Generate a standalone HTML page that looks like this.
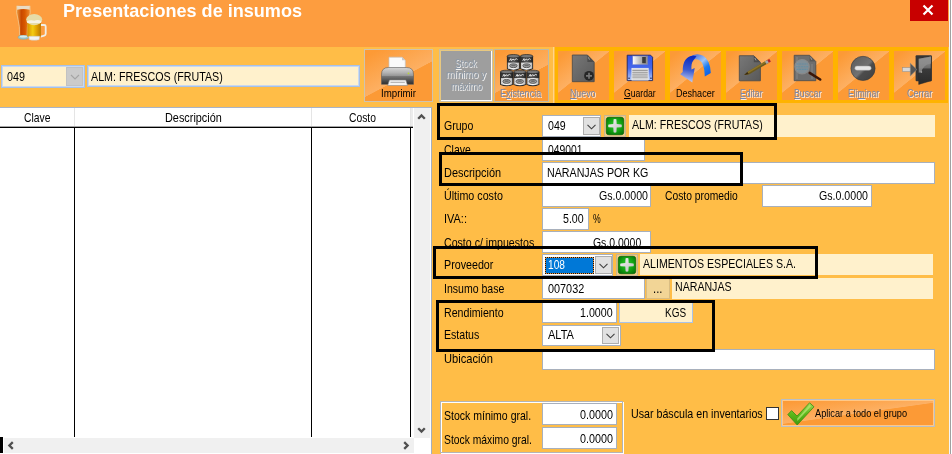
<!DOCTYPE html>
<html lang="es">
<head>
<meta charset="utf-8">
<title>Presentaciones de insumos</title>
<style>
*{box-sizing:border-box;margin:0;padding:0}
html,body{width:952px;height:454px;overflow:hidden}
body{position:relative;background:#FFBD47;font-family:"Liberation Sans",sans-serif;font-size:13px;color:#000}
.abs{position:absolute}
svg.abs{overflow:visible}
.t{position:absolute;white-space:nowrap;transform-origin:0 50%}
.tbw{background:linear-gradient(152deg,#FC9A36 8%,#FDB063 54%,#FC9A36 54.6%)}
.tbs{background:linear-gradient(141deg,#FC9A36 8%,#FDB063 46%,#FC9A36 46.8%)}
.tba{background:linear-gradient(172deg,#FC9A36 5%,#FDB063 50%,#FC9A36 51.5%)}
.dis{color:#7886A8;text-shadow:1px 1px 0 rgba(255,255,255,.8)}
.dis2{color:#8C98A6;text-shadow:1px 1px 0 rgba(255,255,255,.85)}
</style>
</head>
<body>
<svg width="0" height="0" style="position:absolute">
<defs>
<radialGradient id="gPlus" cx="50%" cy="45%" r="65%"><stop offset="0" stop-color="#2CD02C"/><stop offset="0.6" stop-color="#12A012"/><stop offset="1" stop-color="#067006"/></radialGradient>
<linearGradient id="gPlusW" x1="0" y1="0" x2="1" y2="1"><stop offset="0" stop-color="#F4F4F4"/><stop offset="1" stop-color="#BEBEBE"/></linearGradient>
<linearGradient id="gDoc" x1="0" y1="0" x2="1" y2="1"><stop offset="0" stop-color="#787878"/><stop offset="1" stop-color="#585858"/></linearGradient>
<linearGradient id="gPrn" x1="0" y1="0" x2="0" y2="1"><stop offset="0" stop-color="#D6D6D6"/><stop offset="0.300" stop-color="#B4B4B4"/><stop offset="0.480" stop-color="#989898"/><stop offset="0.520" stop-color="#787878"/><stop offset="1" stop-color="#2C2C2C"/></linearGradient>
<linearGradient id="gFlop" x1="0" y1="0" x2="0" y2="1"><stop offset="0" stop-color="#3452E6"/><stop offset="0.5" stop-color="#4468EA"/><stop offset="1" stop-color="#B4CAF4"/></linearGradient>
<linearGradient id="gShut" x1="0" y1="0" x2="1" y2="0"><stop offset="0" stop-color="#FFFFFF"/><stop offset="0.55" stop-color="#B0B0B0"/><stop offset="1" stop-color="#8A8A8A"/></linearGradient>
<linearGradient id="gArr" x1="0.2" y1="0" x2="0.1" y2="1"><stop offset="0" stop-color="#0C2CC0"/><stop offset="0.5" stop-color="#3C5CD0"/><stop offset="1" stop-color="#D8DCF4"/></linearGradient>
<linearGradient id="gArr2" x1="0" y1="0" x2="1" y2="1"><stop offset="0" stop-color="#1034C8"/><stop offset="0.5" stop-color="#9CC4F8"/><stop offset="0.7" stop-color="#1C7CF0"/><stop offset="1" stop-color="#0C58E0"/></linearGradient>
<linearGradient id="gElim" x1="0" y1="0" x2="1" y2="1"><stop offset="0" stop-color="#5A5A5A"/><stop offset="0.520" stop-color="#727272"/><stop offset="0.600" stop-color="#4C4C4C"/><stop offset="1" stop-color="#404040"/></linearGradient>
<linearGradient id="gDoor" x1="0" y1="0" x2="0" y2="1"><stop offset="0" stop-color="#A0A0A0"/><stop offset="0.4" stop-color="#6C6C6C"/><stop offset="0.45" stop-color="#3A3A3A"/><stop offset="1" stop-color="#2A2A2A"/></linearGradient>
<linearGradient id="gChk" x1="0" y1="0" x2="0" y2="1"><stop offset="0" stop-color="#A6DC5A"/><stop offset="0.5" stop-color="#5CB81A"/><stop offset="1" stop-color="#3E9A0E"/></linearGradient>
<linearGradient id="gBeerT" x1="0" y1="0" x2="1" y2="0"><stop offset="0" stop-color="#F0A040"/><stop offset="0.35" stop-color="#C84800"/><stop offset="0.6" stop-color="#D85800"/><stop offset="1" stop-color="#F09030"/></linearGradient>
<linearGradient id="gBeerM" x1="0" y1="0" x2="1" y2="0"><stop offset="0" stop-color="#D89000"/><stop offset="0.4" stop-color="#F4CC10"/><stop offset="0.7" stop-color="#E0A000"/><stop offset="1" stop-color="#B87800"/></linearGradient>
<linearGradient id="gCan" x1="0" y1="0" x2="1" y2="0"><stop offset="0" stop-color="#2A2A2A"/><stop offset="0.5" stop-color="#5A5A5A"/><stop offset="1" stop-color="#222"/></linearGradient>
<linearGradient id="gCanW" x1="0" y1="0" x2="1" y2="0"><stop offset="0" stop-color="#C8C8C8"/><stop offset="0.5" stop-color="#FFFFFF"/><stop offset="1" stop-color="#B8B8B8"/></linearGradient>

</defs>
</svg>
<div class="abs" style="left:0px;top:0px;width:952px;height:47px;background:#FD9D3F"></div>
<div class="t" style="left:63.05px;top:-0.58px;font-size:19px;line-height:24px;transform:scaleX(0.9510);font-weight:bold;color:#fff">Presentaciones de insumos</div>
<div class="abs" style="left:910px;top:0px;width:38px;height:21px;background:#C80000"></div>
<svg class="abs" style="left:921px;top:4px" width="14" height="12" viewBox="0 0 14 12"><path d="M2.5 1.5L11.5 10.5M11.5 1.5L2.5 10.5" stroke="#fff" stroke-width="2.2" fill="none"/></svg>
<svg class="abs" style="left:10px;top:0px" width="50" height="46" viewBox="10 0 50 46">
<ellipse cx="23.400" cy="37.200" rx="5.300" ry="2" fill="#A4CACA" stroke="#7FA6AA" stroke-width="0.600"/>
<ellipse cx="23.400" cy="36.600" rx="3.600" ry="1" fill="#D8ECEC"/>
<path d="M16.800 5.800q-1 7 1.200 13.500 1.900 7 1.600 15.700h7.600q-.3-8.700 1.600-15.700 2.200-6.500 1.200-13.500z" fill="url(#gBeerT)"/>
<path d="M16.800 5.800h13.200l-.2 4q-6.400-1.700-12.800 0z" fill="#EADCC4"/>
<path d="M16.800 5.800q-1 7 1.200 13.500 1.900 7 1.600 15.700M27.200 35q-.3-8.700 1.600-15.700 2.200-6.500 1.200-13.500" fill="none" stroke="#F4C890" stroke-width="0.900" opacity="0.900"/>
<path d="M40.800 25h3.400q1.500 0 1.500 1.500v7.300q0 1.500-1.500 1.900l-3.400.9" fill="none" stroke="#F0EFE6" stroke-width="1.800"/>
<path d="M27.300 22h13.600v13.500q0 1.500-1.500 1.500h-10.600q-1.500 0-1.500-1.500z" fill="url(#gBeerM)"/>
<path d="M28.800 36.300h10.800l-.5 3.400q-4.900 1-9.800 0z" fill="#F2F2F0" stroke="#C8C8C0" stroke-width="0.500"/>
<ellipse cx="34.200" cy="19.600" rx="8" ry="5.600" fill="#E6DCA8"/>
<path d="M26.800 21.300q3.500-1.800 7.500-.6 3.500-1.600 7 .4l-.4 2h-13.600z" fill="#F6F2E4"/>
</svg>
<div class="abs" style="left:1px;top:65px;width:84px;height:23px;background:#FFF1CC;border:1px solid #A6C1E9;box-shadow:inset 0 0 0 1px #C9D9F0"></div>
<div class="abs" style="left:66px;top:67px;width:17px;height:19px;background:#CBCBCB;border:1px solid #C2C2C2"></div>
<svg class="abs" style="left:70px;top:74px" width="10" height="6" viewBox="0 0 10 6"><path d="M1 1L5 5L9 1" stroke="#A4A4A4" stroke-width="1.100" fill="none"/></svg>
<div class="t" style="left:6.50px;top:68.50px;font-size:13px;line-height:16px;transform:scaleX(0.8248);">049</div>
<div class="abs" style="left:87px;top:65px;width:273px;height:22px;background:#FFF1CC;border:1px solid #A6C1E9;box-shadow:inset 0 0 0 1px #C9D9F0"></div>
<div class="t" style="left:91.00px;top:68.50px;font-size:13px;line-height:16px;transform:scaleX(0.8231);">ALM: FRESCOS (FRUTAS)</div>
<div class="abs" style="left:0px;top:107px;width:432px;height:347px;background:#fff;border-top:1px solid #A9B4C8;border-right:1px solid #A4AEC0"></div>
<div class="abs" style="left:0px;top:127px;width:413px;height:1px;background:#000"></div>
<div class="abs" style="left:0px;top:126px;width:413px;height:1px;background:rgba(0,0,0,.35)"></div>
<div class="abs" style="left:74px;top:128px;width:1px;height:309px;background:#000"></div>
<div class="abs" style="left:74px;top:108px;width:1px;height:18px;background:#E5E5E5"></div>
<div class="abs" style="left:311px;top:128px;width:1px;height:309px;background:#000"></div>
<div class="abs" style="left:311px;top:108px;width:1px;height:18px;background:#E5E5E5"></div>
<div class="abs" style="left:410px;top:128px;width:1px;height:309px;background:#000"></div>
<div class="abs" style="left:410px;top:108px;width:1px;height:18px;background:#E5E5E5"></div>
<div class="abs" style="left:411px;top:108px;width:2px;height:18px;background:#ECECEC"></div>
<div class="t" style="left:23.75px;top:110.25px;font-size:13px;line-height:16px;transform:scaleX(0.7953);">Clave</div>
<div class="t" style="left:164.66px;top:110.25px;font-size:13px;line-height:16px;transform:scaleX(0.8360);">Descripción</div>
<div class="t" style="left:348.75px;top:110.25px;font-size:13px;line-height:16px;transform:scaleX(0.7931);">Costo</div>
<div class="abs" style="left:414px;top:108px;width:16px;height:330px;background:#F0F0F0"></div>
<div class="abs" style="left:4px;top:438px;width:410px;height:15px;background:#F0F0F0"></div>
<div class="abs" style="left:0px;top:437px;width:3px;height:16px;background:#000"></div>
<svg class="abs" style="left:417px;top:113px" width="9" height="8" viewBox="0 0 9 8"><path d="M1.200 5.800L4.500 2.400L7.800 5.800" stroke="#505050" stroke-width="2.300" fill="none"/></svg>
<svg class="abs" style="left:417px;top:426px" width="9" height="8" viewBox="0 0 9 8"><path d="M1.200 2.200L4.500 5.600L7.800 2.200" stroke="#505050" stroke-width="2.300" fill="none"/></svg>
<svg class="abs" style="left:7px;top:441px" width="8" height="9" viewBox="0 0 8 9"><path d="M5.800 1.200L2.400 4.500L5.800 7.800" stroke="#505050" stroke-width="2.300" fill="none"/></svg>
<svg class="abs" style="left:402px;top:441px" width="8" height="9" viewBox="0 0 8 9"><path d="M2.200 1.200L5.600 4.500L2.200 7.800" stroke="#505050" stroke-width="2.300" fill="none"/></svg>
<div class="abs tbw" style="left:364px;top:49px;width:69px;height:53px;border:1px solid #CFC3B0"></div>
<svg class="abs" style="left:378px;top:54px" width="40" height="34" viewBox="378 54 40 34">
<path d="M389 57.200h13l3.300 3.300v9.500h-16.300z" fill="#FAFAFA" stroke="#C4C4C4" stroke-width="0.700"/>
<path d="M402 57v3.300h3.300z" fill="#C8C8C8"/>
<path d="M381.500 84.300v-10q0-6.800 7-6.800h18q7 0 7 6.800v10z" fill="url(#gPrn)"/>
<path d="M381.500 84.300v-10q0-6.800 7-6.800h18q7 0 7 6.800v10z" fill="none" stroke="#5A5A5A" stroke-width="0.6"/>
<circle cx="408.500" cy="73.300" r="0.900" fill="#B8D830"/>
<path d="M389.500 80h16.300l1.700 5.500h-19.800z" fill="#F4F4F4" stroke="#8A8A8A" stroke-width="0.600"/>
<path d="M390.500 82.300h14.300" stroke="#A8A8A8" stroke-width="1"/>
</svg>
<div class="t" style="left:380.60px;top:86.79px;font-size:10.7px;line-height:13px;transform:scaleX(0.9071);">Imprimir</div>
<div class="abs" style="left:439px;top:49px;width:54px;height:53px;background:#9E9E9E;border:1px solid #C9BFA8;box-shadow:inset 1px 1px 0 #E8C880, inset -1px -1px 0 #fff"></div>
<div class="t dis2" style="left:455.00px;top:57.53px;font-size:10px;line-height:12px;transform:scaleX(0.8651);"><u>S</u>tock</div>
<div class="t dis2" style="left:446.00px;top:68.83px;font-size:10px;line-height:12px;transform:scaleX(0.9862);">mínimo y</div>
<div class="t dis2" style="left:450.50px;top:80.53px;font-size:10px;line-height:12px;transform:scaleX(0.8887);">máximo</div>
<div class="abs tbw" style="left:494px;top:49px;width:55px;height:53px;border:1px solid #BDB9A6"></div>
<svg class="abs" style="left:498px;top:52px" width="44" height="36" viewBox="498 52 44 36">
<g transform="translate(506.900,54.200)"><path d="M0 2v12.800q6.500 3.200 13 0v-12.800z" fill="#262626"/>
<path d="M0.900 8h11.200v6.300q-5.600 2.300-11.200 0z" fill="url(#gCanW)"/>
<path d="M0.300 2.500h12.400v5.700h-12.400z" fill="url(#gCan)"/>
<ellipse cx="6.500" cy="2" rx="6.300" ry="1.700" fill="#777" stroke="#242424" stroke-width="0.700"/>
<path d="M2.600 6.600l1.300-2.200.5 2 1.700-1.400 1.500.7 1.800-1.200 1.200.8" stroke="#F0F0F0" stroke-width="0.900" fill="none"/>
<ellipse cx="6.500" cy="11.500" rx="3.700" ry="2" fill="#A4A4A4" stroke="#454545" stroke-width="0.800"/>
<ellipse cx="6.500" cy="11.200" rx="2.300" ry="0.900" fill="#6A6A6A"/></g><g transform="translate(520.100,54.200)"><path d="M0 2v12.800q6.500 3.200 13 0v-12.800z" fill="#262626"/>
<path d="M0.900 8h11.200v6.300q-5.600 2.300-11.200 0z" fill="url(#gCanW)"/>
<path d="M0.300 2.500h12.400v5.700h-12.400z" fill="url(#gCan)"/>
<ellipse cx="6.500" cy="2" rx="6.300" ry="1.700" fill="#777" stroke="#242424" stroke-width="0.700"/>
<path d="M2.600 6.600l1.300-2.200.5 2 1.700-1.400 1.500.7 1.800-1.200 1.200.8" stroke="#F0F0F0" stroke-width="0.900" fill="none"/>
<ellipse cx="6.500" cy="11.500" rx="3.700" ry="2" fill="#A4A4A4" stroke="#454545" stroke-width="0.800"/>
<ellipse cx="6.500" cy="11.200" rx="2.300" ry="0.900" fill="#6A6A6A"/></g>
<g transform="translate(500.100,69.900)"><path d="M0 2v12.800q6.500 3.200 13 0v-12.800z" fill="#262626"/>
<path d="M0.900 8h11.200v6.300q-5.600 2.300-11.200 0z" fill="url(#gCanW)"/>
<path d="M0.300 2.500h12.400v5.700h-12.400z" fill="url(#gCan)"/>
<ellipse cx="6.500" cy="2" rx="6.300" ry="1.700" fill="#777" stroke="#242424" stroke-width="0.700"/>
<path d="M2.600 6.600l1.300-2.200.5 2 1.700-1.400 1.500.7 1.800-1.200 1.200.8" stroke="#F0F0F0" stroke-width="0.900" fill="none"/>
<ellipse cx="6.500" cy="11.500" rx="3.700" ry="2" fill="#A4A4A4" stroke="#454545" stroke-width="0.800"/>
<ellipse cx="6.500" cy="11.200" rx="2.300" ry="0.900" fill="#6A6A6A"/></g><g transform="translate(513.300,69.900)"><path d="M0 2v12.800q6.500 3.200 13 0v-12.800z" fill="#262626"/>
<path d="M0.900 8h11.200v6.300q-5.600 2.300-11.200 0z" fill="url(#gCanW)"/>
<path d="M0.300 2.500h12.400v5.700h-12.400z" fill="url(#gCan)"/>
<ellipse cx="6.500" cy="2" rx="6.300" ry="1.700" fill="#777" stroke="#242424" stroke-width="0.700"/>
<path d="M2.600 6.600l1.300-2.200.5 2 1.700-1.400 1.500.7 1.800-1.200 1.200.8" stroke="#F0F0F0" stroke-width="0.900" fill="none"/>
<ellipse cx="6.500" cy="11.500" rx="3.700" ry="2" fill="#A4A4A4" stroke="#454545" stroke-width="0.800"/>
<ellipse cx="6.500" cy="11.200" rx="2.300" ry="0.900" fill="#6A6A6A"/></g><g transform="translate(526.400,69.900)"><path d="M0 2v12.800q6.500 3.200 13 0v-12.800z" fill="#262626"/>
<path d="M0.900 8h11.200v6.300q-5.600 2.300-11.200 0z" fill="url(#gCanW)"/>
<path d="M0.300 2.500h12.400v5.700h-12.400z" fill="url(#gCan)"/>
<ellipse cx="6.500" cy="2" rx="6.300" ry="1.700" fill="#777" stroke="#242424" stroke-width="0.700"/>
<path d="M2.600 6.600l1.300-2.200.5 2 1.700-1.400 1.500.7 1.800-1.200 1.200.8" stroke="#F0F0F0" stroke-width="0.900" fill="none"/>
<ellipse cx="6.500" cy="11.500" rx="3.700" ry="2" fill="#A4A4A4" stroke="#454545" stroke-width="0.800"/>
<ellipse cx="6.500" cy="11.200" rx="2.300" ry="0.900" fill="#6A6A6A"/></g>
</svg>
<div class="t dis" style="left:499.90px;top:87.94px;font-size:10px;line-height:12px;transform:scaleX(0.9041);">E<u>x</u>istencia</div>
<div class="abs" style="left:553px;top:47px;width:1px;height:56px;background:#FFD48A"></div>
<div class="abs" style="left:555px;top:47px;width:393px;height:56px;background:#FFB300"></div>
<div class="abs tbs" style="left:558px;top:51px;width:51px;height:49px;"></div>
<div class="abs tbs" style="left:614px;top:51px;width:51px;height:49px;"></div>
<div class="abs tbs" style="left:670px;top:51px;width:51px;height:49px;"></div>
<div class="abs tbs" style="left:726px;top:51px;width:51px;height:49px;"></div>
<div class="abs tbs" style="left:782px;top:51px;width:51px;height:49px;"></div>
<div class="abs tbs" style="left:838px;top:51px;width:51px;height:49px;"></div>
<div class="abs tbs" style="left:894px;top:51px;width:51px;height:49px;"></div>
<svg class="abs" style="left:570px;top:53px" width="28" height="32" viewBox="570 53 28 32">
<path d="M572.300 55h15.100l6.800 7v19.700h-21.900z" fill="url(#gDoc)" stroke="#474747" stroke-width="0.800"/>
<path d="M587.400 55v7h6.800z" fill="#4C4C4C"/>
<path d="M588.300 57.300l1.200 2.400" stroke="#B0B0B0" stroke-width="0.800"/>
<circle cx="589" cy="75.800" r="4.900" fill="#262626"/>
<path d="M589 72.800v6M586 75.800h6" stroke="#767676" stroke-width="1.700"/>
</svg><svg class="abs" style="left:625px;top:53px" width="30" height="30" viewBox="625 53 30 30">
<path d="M627.200 55.200h23.400l2 2v23.400h-25.400z" fill="url(#gFlop)" stroke="#1E2460" stroke-width="0.900"/>
<rect x="632.700" y="56" width="15.100" height="8.700" fill="url(#gShut)" stroke="#7080C8" stroke-width="0.500"/>
<rect x="642.200" y="57" width="3.600" height="6.200" fill="#3A3A3A"/>
<rect x="631.900" y="68.300" width="16.300" height="11.800" fill="#D4D4D4" stroke="#F4F4F4" stroke-width="0.700"/>
<path d="M632.400 70.500h15.300M632.400 72.700h15.300M632.400 74.900h15.300M632.400 77.100h15.300" stroke="#9C9C9C" stroke-width="1"/>
<rect x="628.400" y="77.600" width="1.300" height="1.300" fill="#1A1A50"/><rect x="650.300" y="77.600" width="1.300" height="1.300" fill="#1A1A50"/>
</svg><svg class="abs" style="left:678px;top:52px" width="36" height="34" viewBox="678 52 36 34">
<path d="M690 64q3-6.500 9-4 5.500 2.500 5.800 16.500l6-3.500q-.5-13-7.500-17.300-7-3.700-14 1.300-4.500 3.800-4.800 11z" fill="url(#gArr2)"/>
<path d="M696.500 56.200q-7-1.500-11 3.500-3 4-2.800 12.300l-2.500 2.300 12.100 8.300 2.400-14.600-3.200 1.500q-.5-6 1.500-8.500 1.300-2 3.500-4.800z" fill="url(#gArr)"/>
</svg><svg class="abs" style="left:737px;top:53px" width="36" height="32" viewBox="737 53 36 32">
<path d="M739.300 55.700h14.500l6.600 6.600v18.500h-21.100z" fill="url(#gDoc)" stroke="#474747" stroke-width="0.800"/>
<path d="M753.800 55.700v6.600h6.600z" fill="#4C4C4C"/>
<path d="M754.800 58l1.200 2.400" stroke="#B0B0B0" stroke-width="0.800"/>
<path d="M744.100 75.100l3.200-3.200 19.600-11.600 1.600 2.600-19.600 11.600z" fill="#6C5A1E"/>
<path d="M747.300 71.900l19.600-11.600.8 1.300-19.600 11.600z" fill="#8C7428"/>
<path d="M744.100 75.100l3.200-3.200 1.300 2.100z" fill="#3A2A10"/>
<path d="M764.900 61.500l2.400-1.400 1.600 2.600-2.400 1.400z" fill="#A8A8A8"/>
<path d="M767.300 60.100l2-1.200 1.600 2.600-2 1.200z" fill="#B02030"/>
</svg><svg class="abs" style="left:792px;top:53px" width="32" height="30" viewBox="792 53 32 30">
<path d="M794.200 55.300h15.400l6.200 6.200v19.200h-21.600z" fill="#6E6E6E" stroke="#4A4A4A" stroke-width="0.800"/>
<path d="M797 57v22M812 64v15" stroke="#7E7E7E" stroke-width="1.600"/>
<path d="M809.600 55.300v6.200h6.200z" fill="#585858"/>
<path d="M810.600 57.400l1.200 2.400" stroke="#B0B0B0" stroke-width="0.800"/>
<circle cx="802.100" cy="66.700" r="7.200" fill="#8CA2AE" fill-opacity="0.650" stroke="#8A8A8A" stroke-width="1.100"/>
<path d="M796.500 64h11.200M795.800 66.700h12.600M796.500 69.400h11.200" stroke="#5E8CA4" stroke-opacity="0.750" stroke-width="1.100" stroke-dasharray="2 0.600"/>
<path d="M807.800 72.200l2.200 1.200" stroke="#8A8A8A" stroke-width="2"/>
<path d="M809.600 72.900l10.600 6.600" stroke="#3C1608" stroke-width="2.600" stroke-linecap="round"/>
</svg><svg class="abs" style="left:850px;top:55px" width="27" height="27" viewBox="850 55 27 27">
<circle cx="863" cy="68.400" r="12.100" fill="url(#gElim)" stroke="#3A3A3A" stroke-width="0.600"/>
<rect x="854.800" y="66" width="16.400" height="4.300" rx="2.100" fill="#E6E6E6" stroke="#9A9A9A" stroke-width="0.500"/>
</svg><svg class="abs" style="left:900px;top:53px" width="34" height="34" viewBox="900 53 34 34">
<rect x="915.600" y="55.300" width="16.300" height="26" rx="1" fill="#343434"/>
<path d="M918.700 58.800l12.300-2.200v24.200l-12.300 3.600z" fill="url(#gDoor)" stroke="#2A2A2A" stroke-width="0.500"/>
<path d="M918.700 58.800l12.300-2.200v7q-8 1-9.500 8.500l-2.800.6z" fill="#8E8E8E" opacity="0.800"/>
<circle cx="921.300" cy="72" r="0.900" fill="#9A9A9A"/>
<rect x="902.400" y="67.600" width="9" height="4" fill="#D8D8D8" stroke="#8A8A8A" stroke-width="0.500"/>
<path d="M910.300 63.200l6.600 6.400-6.600 6.400z" fill="#555" stroke="#8A8A8A" stroke-width="0.500"/>
</svg>
<div class="t dis" style="left:570.00px;top:88.03px;font-size:10px;line-height:12px;transform:scaleX(0.8792);"><u>N</u>uevo</div>
<div class="t" style="left:623.70px;top:88.03px;font-size:10px;line-height:12px;transform:scaleX(0.8647);"><u>G</u>uardar</div>
<div class="t" style="left:675.70px;top:88.03px;font-size:10px;line-height:12px;transform:scaleX(0.9041);">Deshacer</div>
<div class="t dis" style="left:739.90px;top:88.03px;font-size:10px;line-height:12px;transform:scaleX(0.8622);"><u>E</u>ditar</div>
<div class="t dis" style="left:793.60px;top:88.03px;font-size:10px;line-height:12px;transform:scaleX(0.8776);"><u>B</u>uscar</div>
<div class="t dis" style="left:847.70px;top:88.03px;font-size:10px;line-height:12px;transform:scaleX(0.8644);">Eli<u>m</u>inar</div>
<div class="t dis" style="left:906.60px;top:88.03px;font-size:10px;line-height:12px;transform:scaleX(0.8930);">Cerrar</div>
<div class="abs" style="left:949px;top:0px;width:1px;height:454px;background:#F4F5F9"></div>
<div class="abs" style="left:950px;top:0px;width:1px;height:454px;background:#A0A0A0"></div>
<div class="abs" style="left:951px;top:0px;width:1px;height:454px;background:#FFFFFF"></div>
<div class="abs" style="left:629px;top:115px;width:306px;height:22px;background:#FFF1CC"></div>
<div class="abs" style="left:640px;top:254px;width:293px;height:21px;background:#FFF1CC"></div>
<div class="abs" style="left:672px;top:278px;width:261px;height:21px;background:#FFF1CC"></div>
<div class="t" style="left:444.40px;top:118.25px;font-size:13px;line-height:16px;transform:scaleX(0.8106);">Grupo</div>
<div class="t" style="left:444.40px;top:141.50px;font-size:13px;line-height:16px;transform:scaleX(0.8059);">Clave</div>
<div class="t" style="left:443.56px;top:165.25px;font-size:13px;line-height:16px;transform:scaleX(0.8413);">Descripción</div>
<div class="t" style="left:443.58px;top:188.25px;font-size:13px;line-height:16px;transform:scaleX(0.8230);">Último costo</div>
<div class="t" style="left:443.56px;top:211.00px;font-size:13px;line-height:16px;transform:scaleX(0.8437);">IVA::</div>
<div class="t" style="left:444.40px;top:234.50px;font-size:13px;line-height:16px;transform:scaleX(0.8159);">Costo c/ impuestos</div>
<div class="t" style="left:443.58px;top:257.25px;font-size:13px;line-height:16px;transform:scaleX(0.8231);">Proveedor</div>
<div class="t" style="left:443.59px;top:281.00px;font-size:13px;line-height:16px;transform:scaleX(0.8108);">Insumo base</div>
<div class="t" style="left:443.58px;top:304.75px;font-size:13px;line-height:16px;transform:scaleX(0.8167);">Rendimiento</div>
<div class="t" style="left:443.59px;top:327.25px;font-size:13px;line-height:16px;transform:scaleX(0.8132);">Estatus</div>
<div class="t" style="left:443.54px;top:351.00px;font-size:13px;line-height:16px;transform:scaleX(0.8567);">Ubicación</div>
<div class="t" style="left:664.50px;top:188.25px;font-size:13px;line-height:16px;transform:scaleX(0.7920);">Costo promedio</div>
<div class="t" style="left:593.00px;top:211.00px;font-size:13px;line-height:16px;transform:scaleX(0.6667);">%</div>
<div class="abs" style="left:542px;top:115px;width:59px;height:22px;background:#fff;border:1px solid #A8B0BC;"></div>
<div class="abs" style="left:583px;top:117px;width:17px;height:18px;background:#E1E1E1;border:1px solid #ADADAD"></div><svg class="abs" style="left:587.0px;top:123.5px" width="9" height="6" viewBox="0 0 9 6"><path d="M0.5 0.8L4.5 4.8L8.5 0.8" stroke="#404040" stroke-width="1.1" fill="none"/></svg>
<div class="t" style="left:547.50px;top:118.00px;font-size:13px;line-height:16px;transform:scaleX(0.8155);">049</div>
<svg class="abs" style="left:603.5px;top:115px" width="22" height="22" viewBox="0 0 22 22"><rect x="0.5" y="0.5" width="21" height="21" fill="#EFC98A" stroke="#C8B690"/><rect x="2.3" y="2.3" width="17.4" height="17.4" rx="2.5" fill="url(#gPlus)" stroke="#0B6A0B" stroke-width="0.8"/><path d="M9.600 4.300q1.400-.8 2.800 0l.3 4.800 4.800.3q.8 1.400 0 2.800l-4.800.3-.3 4.800q-1.400.8-2.800 0l-.3-4.800-4.800-.3q-.8-1.400 0-2.800l4.800-.3z" fill="url(#gPlusW)"/></svg>
<div class="t" style="left:631.75px;top:117.00px;font-size:13px;line-height:16px;transform:scaleX(0.8168);">ALM: FRESCOS (FRUTAS)</div>
<div class="abs" style="left:542px;top:139px;width:103px;height:22px;background:#fff;border:1px solid #A8B0BC;"></div>
<div class="t" style="left:547.50px;top:141.50px;font-size:13px;line-height:16px;transform:scaleX(0.7937);">049001</div>
<div class="abs" style="left:542px;top:162px;width:393px;height:22px;background:#fff;border:1px solid #A8B0BC;"></div>
<div class="t" style="left:546.68px;top:165.25px;font-size:13px;line-height:16px;transform:scaleX(0.8210);">NARANJAS POR KG</div>
<div class="abs" style="left:542px;top:185px;width:109px;height:22px;background:#fff;border:1px solid #A8B0BC;"></div>
<div class="t" style="left:598.75px;top:188.25px;font-size:13px;line-height:16px;transform:scaleX(0.8158);">Gs.0.0000</div>
<div class="abs" style="left:762px;top:185px;width:110px;height:22px;background:#fff;border:1px solid #A8B0BC;"></div>
<div class="t" style="left:818.50px;top:188.25px;font-size:13px;line-height:16px;transform:scaleX(0.8158);">Gs.0.0000</div>
<div class="abs" style="left:542px;top:208px;width:47px;height:22px;background:#fff;border:1px solid #A8B0BC;"></div>
<div class="t" style="left:563.00px;top:211.00px;font-size:13px;line-height:16px;transform:scaleX(0.8177);">5.00</div>
<div class="abs" style="left:542px;top:231px;width:109px;height:22px;background:#fff;border:1px solid #A8B0BC;"></div>
<div class="t" style="left:593.00px;top:234.50px;font-size:13px;line-height:16px;transform:scaleX(0.8033);">Gs.0.0000</div>
<div class="abs" style="left:542px;top:254px;width:71px;height:22px;background:#fff;border:1px solid #A8B0BC;"></div>
<div class="abs" style="left:545px;top:257px;width:49px;height:17px;background:#0078D7;border:1px solid #E8903A;outline:1px dotted #111;outline-offset:-1px"></div>
<div class="t" style="left:548.00px;top:257.25px;font-size:13px;line-height:16px;transform:scaleX(0.7805);color:#fff">108</div>
<div class="abs" style="left:595px;top:256px;width:17px;height:18px;background:#E1E1E1;border:1px solid #ADADAD"></div><svg class="abs" style="left:599.0px;top:262.5px" width="9" height="6" viewBox="0 0 9 6"><path d="M0.5 0.8L4.5 4.8L8.5 0.8" stroke="#404040" stroke-width="1.1" fill="none"/></svg>
<svg class="abs" style="left:616px;top:254px" width="22" height="22" viewBox="0 0 22 22"><rect x="0.5" y="0.5" width="21" height="21" fill="#EFC98A" stroke="#C8B690"/><rect x="2.3" y="2.3" width="17.4" height="17.4" rx="2.5" fill="url(#gPlus)" stroke="#0B6A0B" stroke-width="0.8"/><path d="M9.600 4.300q1.400-.8 2.800 0l.3 4.800 4.800.3q.8 1.400 0 2.800l-4.800.3-.3 4.800q-1.400.8-2.800 0l-.3-4.800-4.800-.3q-.8-1.400 0-2.800l4.800-.3z" fill="url(#gPlusW)"/></svg>
<div class="t" style="left:643.00px;top:256.00px;font-size:13px;line-height:16px;transform:scaleX(0.8155);">ALIMENTOS ESPECIALES S.A.</div>
<div class="abs" style="left:542px;top:278px;width:103px;height:21px;background:#fff;border:1px solid #A8B0BC;"></div>
<div class="t" style="left:547.50px;top:281.00px;font-size:13px;line-height:16px;transform:scaleX(0.8343);">007032</div>
<div class="abs" style="left:646px;top:278px;width:24px;height:21px;background:#F2D596;border:1px solid #D9BD83"></div>
<div class="t" style="left:653.13px;top:281.00px;font-size:13px;line-height:16px;transform:scaleX(0.8673);">...</div>
<div class="t" style="left:674.93px;top:279.00px;font-size:13px;line-height:16px;transform:scaleX(0.8154);">NARANJAS</div>
<div class="abs" style="left:542px;top:302px;width:75px;height:21px;background:#fff;border:1px solid #A8B0BC;"></div>
<div class="t" style="left:580.00px;top:304.75px;font-size:13px;line-height:16px;transform:scaleX(0.8221);">1.0000</div>
<div class="abs" style="left:619px;top:302px;width:74px;height:21px;background:#FFF1CC;border:1px solid #A9C3E8"></div>
<div class="t" style="left:664.98px;top:304.75px;font-size:13px;line-height:16px;transform:scaleX(0.7654);">KGS</div>
<div class="abs" style="left:542px;top:325px;width:79px;height:21px;background:#fff;border:1px solid #A8B0BC;"></div>
<div class="abs" style="left:602px;top:327px;width:17px;height:17px;background:#E1E1E1;border:1px solid #ADADAD"></div><svg class="abs" style="left:606.0px;top:333.0px" width="9" height="6" viewBox="0 0 9 6"><path d="M0.5 0.8L4.5 4.8L8.5 0.8" stroke="#404040" stroke-width="1.1" fill="none"/></svg>
<div class="t" style="left:547.50px;top:327.25px;font-size:13px;line-height:16px;transform:scaleX(0.8492);">ALTA</div>
<div class="abs" style="left:542px;top:349px;width:393px;height:21px;background:#fff;border:1px solid #A8B0BC;"></div>
<div class="abs" style="left:440px;top:401px;width:183px;height:52px;border:1px solid #B4B4B4;box-shadow:inset 1px 1px 0 #fff, 1px 1px 0 #fff"></div>
<div class="t" style="left:444.40px;top:407.50px;font-size:13px;line-height:16px;transform:scaleX(0.8091);">Stock mínimo gral.</div>
<div class="t" style="left:444.40px;top:431.50px;font-size:13px;line-height:16px;transform:scaleX(0.7947);">Stock máximo gral.</div>
<div class="abs" style="left:542px;top:403px;width:75px;height:22px;background:#fff;border:1px solid #A8B0BC;"></div>
<div class="t" style="left:579.75px;top:406.50px;font-size:13px;line-height:16px;transform:scaleX(0.8284);">0.0000</div>
<div class="abs" style="left:542px;top:427px;width:75px;height:22px;background:#fff;border:1px solid #A8B0BC;"></div>
<div class="t" style="left:579.75px;top:430.50px;font-size:13px;line-height:16px;transform:scaleX(0.8284);">0.0000</div>
<div class="t" style="left:630.58px;top:406.00px;font-size:13px;line-height:16px;transform:scaleX(0.8210);">Usar báscula en inventarios</div>
<div class="abs" style="left:766px;top:407px;width:13px;height:13px;background:#fff;border:1px solid #333"></div>
<div class="abs tba" style="left:781px;top:399px;width:154px;height:28px;border:1px solid #B9BEC4;box-shadow:inset 0 0 0 1px #FFC888"></div>
<svg class="abs" style="left:786px;top:401px" width="30" height="26" viewBox="786 401 30 26">
<path d="M787.800 414.600l3.800-4 5.400 5.400 12.600-13.200 4.400 4-16.800 18.200z" fill="url(#gChk)" stroke="#3C8C10" stroke-width="0.800" stroke-linejoin="round"/>
<path d="M797.200 418.400l12.300-13.400 1.600 1.300-13.700 14.600z" fill="#B8E878" opacity="0.700"/>
</svg>
<div class="t" style="left:815.00px;top:407.54px;font-size:10px;line-height:12px;transform:scaleX(0.9204);">Aplicar a todo el grupo</div>
<div class="abs" style="left:437px;top:103px;width:340px;height:36.5px;border:3px solid #000"></div>
<div class="abs" style="left:439px;top:152px;width:304px;height:33.5px;border:3px solid #000"></div>
<div class="abs" style="left:433px;top:246px;width:385px;height:32.5px;border:3px solid #000"></div>
<div class="abs" style="left:436px;top:300px;width:279px;height:51.5px;border:3px solid #000"></div>
</body>
</html>
